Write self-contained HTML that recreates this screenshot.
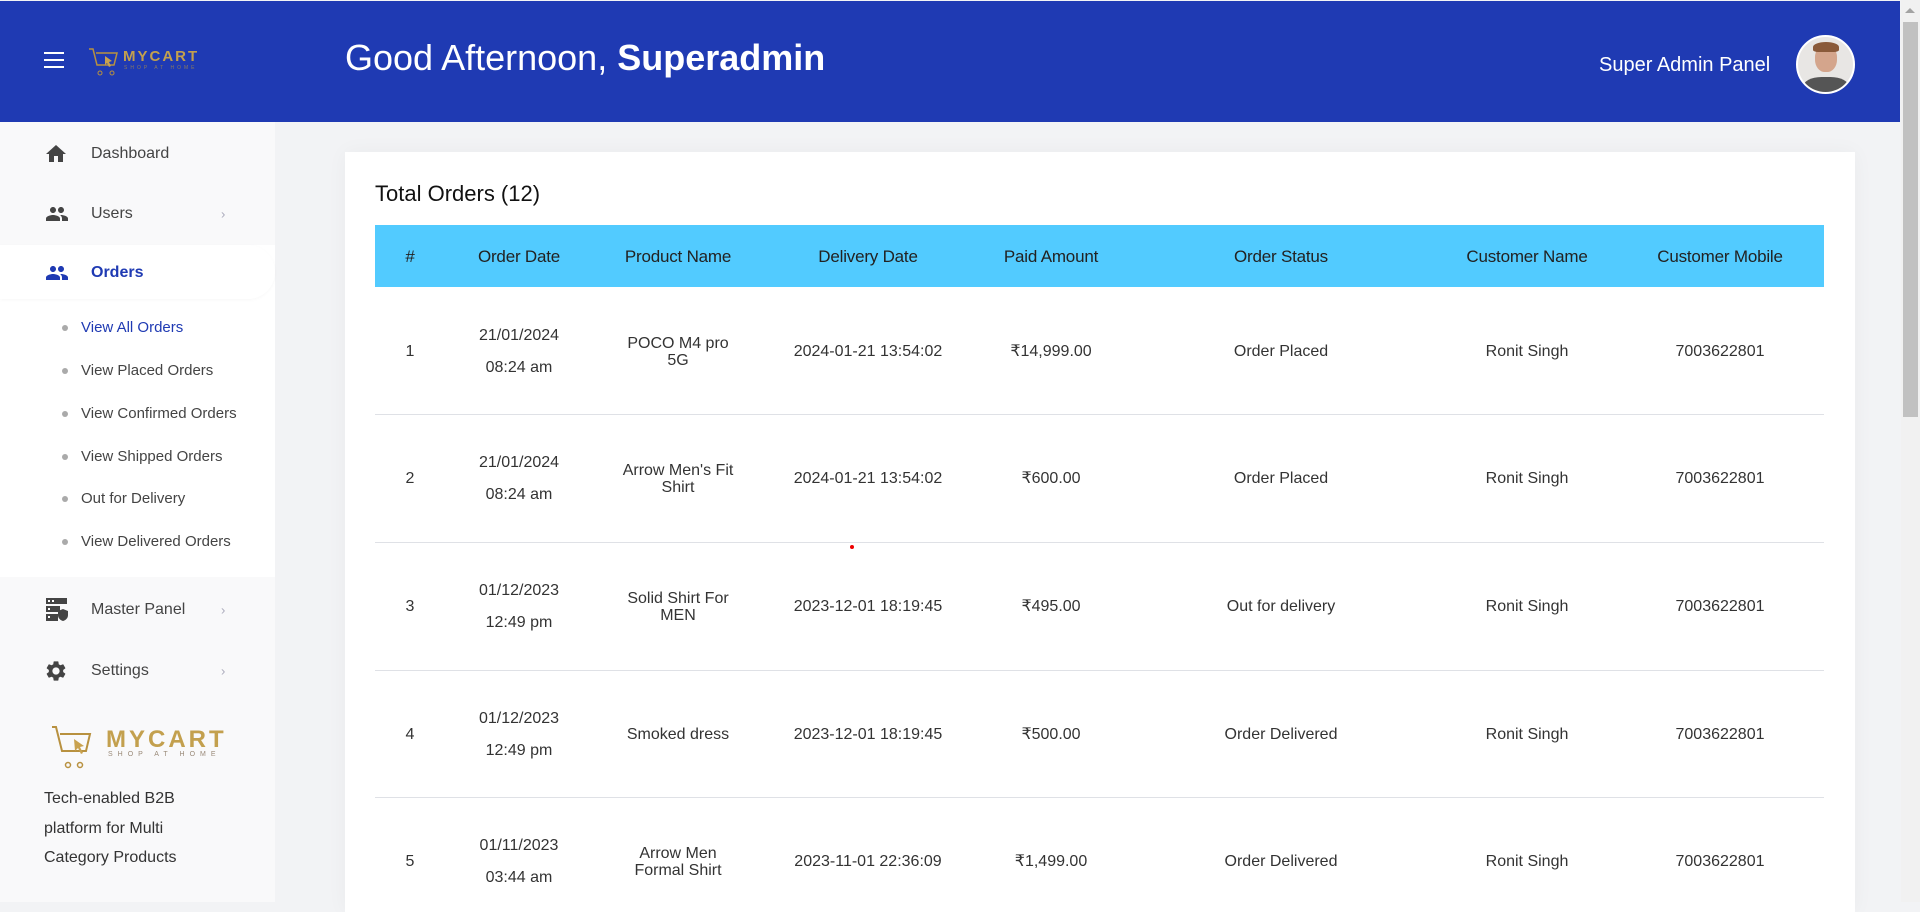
<!DOCTYPE html>
<html><head><meta charset="utf-8"><style>
*{margin:0;padding:0;box-sizing:border-box}
body{width:1920px;height:902px;overflow:hidden;background:#f2f3f5;font-family:"Liberation Sans",sans-serif;position:relative;color:#333}
.hdr{position:absolute;left:0;top:1px;width:1900px;height:121px;background:#1f3ab3}
.abs{position:absolute}
.sb{position:absolute;left:0;top:122px;width:275px;height:780px;background:#f9f9fa}
.menu{position:absolute;left:91px;font-size:16px;line-height:20px;color:#444;transform:translateY(-50%)}
.ico{position:absolute;left:44px;transform:translateY(-50%)}
.chev{position:absolute;left:221px;font-size:13px;color:#aab;transform:translateY(-50%)}
.sub{position:absolute;left:81px;font-size:15px;line-height:18px;color:#444;transform:translateY(-50%)}
.dot{position:absolute;left:62px;width:6px;height:6px;border-radius:50%;background:#aaa;transform:translateY(-50%)}
.card{position:absolute;left:345px;top:152px;width:1510px;height:760px;background:#fff;box-shadow:0 0 20px rgba(0,0,0,.04)}
.th{position:absolute;left:375px;top:225px;width:1449px;height:62px;background:#52cbff}
.c{position:absolute;transform:translate(-50%,-50%);text-align:center;white-space:nowrap;line-height:20px}
.h{font-size:17px;color:#222;letter-spacing:-0.2px}
.d{font-size:16px;color:#333}
.line{position:absolute;left:375px;width:1449px;height:1px;background:#dfe1e6}
.sc{position:absolute;left:1901px;top:0;width:19px;height:902px;background:#f1f1f1}
</style></head><body>
<div class="hdr"></div>
<div class="abs" style="left:44px;top:52px;width:20px;height:2px;background:#fff"></div>
<div class="abs" style="left:44px;top:59px;width:20px;height:2px;background:#fff"></div>
<div class="abs" style="left:44px;top:66px;width:20px;height:2px;background:#fff"></div>
<svg class="abs" style="left:88px;top:47px" width="32" height="30" viewBox="0 0 32 30"><path d="M1 2h4l4 16h17l3-12H8" fill="none" stroke="#b8913f" stroke-width="1.5"/><circle cx="12" cy="26" r="2" fill="none" stroke="#b8913f"/><circle cx="24" cy="26" r="2" fill="none" stroke="#b8913f"/><path d="M17 9l7 5-3 1 2 4-2 1-2-4-2 2z" fill="#c9a24f"/></svg>
<div class="abs" style="left:123px;top:48px;font-size:15px;font-weight:bold;letter-spacing:2px;color:#c3a04e">MYCART</div>
<div class="abs" style="left:124px;top:65px;font-size:5px;letter-spacing:3px;color:#8a7a60">SHOP AT HOME</div>
<div class="abs" style="left:345px;top:37px;font-size:36px;color:#fff">Good Afternoon, <b>Superadmin</b></div>
<div class="abs" style="left:1599px;top:54px;font-size:20px;color:#fff">Super Admin Panel</div>
<div class="abs" style="left:1796px;top:35px;width:59px;height:59px;border-radius:50%;border:2px solid #fff;background:#e8e6e4;overflow:hidden">
<div class="abs" style="left:17px;top:8px;width:22px;height:27px;border-radius:45%;background:#d4a58c"></div>
<div class="abs" style="left:15px;top:5px;width:26px;height:10px;border-radius:50% 50% 20% 20%;background:#8a5a3a"></div>
<div class="abs" style="left:5px;top:40px;width:46px;height:25px;border-radius:40% 40% 0 0;background:#555"></div>
</div>
<div class="sb"></div>
<div class="abs" style="left:0;top:245px;width:275px;height:332px;background:#fff"></div>
<div class="abs" style="left:0;top:245px;width:275px;height:54px;background:#fff;border-radius:0 27px 27px 0;box-shadow:0 1px 3px rgba(0,0,0,.03)"></div>
<svg class="ico" style="top:154px" width="24" height="24" viewBox="0 0 24 24"><path d="M10 20v-6h4v6h5v-8h3L12 3 2 12h3v8z" fill="#444"/></svg>
<div class="menu" style="top:154px">Dashboard</div>
<svg class="ico" style="top:214px" width="26" height="24" viewBox="0 0 24 24"><path d="M16 11c1.66 0 3-1.34 3-3s-1.34-3-3-3-3 1.34-3 3 1.34 3 3 3zm-8 0c1.66 0 3-1.34 3-3S9.66 5 8 5 5 6.34 5 8s1.34 3 3 3zm0 2c-2.33 0-7 1.17-7 3.5V19h14v-2.5c0-2.33-4.67-3.5-7-3.5zm8 0c-.29 0-.62.02-.97.05 1.16.84 1.97 1.970 1.97 3.45V19h6v-2.5c0-2.33-4.67-3.5-7-3.5z" fill="#444"/></svg>
<div class="menu" style="top:214px">Users</div><div class="chev" style="top:214px">›</div>
<svg class="ico" style="top:273px" width="26" height="24" viewBox="0 0 24 24"><path d="M16 11c1.66 0 3-1.34 3-3s-1.34-3-3-3-3 1.34-3 3 1.34 3 3 3zm-8 0c1.66 0 3-1.34 3-3S9.66 5 8 5 5 6.34 5 8s1.34 3 3 3zm0 2c-2.33 0-7 1.17-7 3.5V19h14v-2.5c0-2.33-4.67-3.5-7-3.5zm8 0c-.29 0-.62.02-.97.05 1.160.84 1.97 1.97 1.97 3.45V19h6v-2.5c0-2.33-4.67-3.5-7-3.5z" fill="#1f3ab3"/></svg>
<div class="menu" style="top:273px;color:#1f3ab3;font-weight:bold">Orders</div>
<div class="dot" style="top:328px"></div><div class="sub" style="top:328px;color:#1f3ab3">View All Orders</div>
<div class="dot" style="top:371px"></div><div class="sub" style="top:371px">View Placed Orders</div>
<div class="dot" style="top:414px"></div><div class="sub" style="top:414px">View Confirmed Orders</div>
<div class="dot" style="top:457px"></div><div class="sub" style="top:457px">View Shipped Orders</div>
<div class="dot" style="top:499px"></div><div class="sub" style="top:499px">Out for Delivery</div>
<div class="dot" style="top:542px"></div><div class="sub" style="top:542px">View Delivered Orders</div>
<svg class="ico" style="top:610px;left:45px" width="24" height="26" viewBox="0 0 24 26"><rect x="1" y="1" width="21" height="6" fill="#444"/><rect x="1" y="9" width="14" height="6" fill="#444"/><rect x="1" y="17" width="12" height="7" fill="#444"/><rect x="3" y="3" width="2" height="2" fill="#fff"/><rect x="7" y="3" width="2" height="2" fill="#fff"/><rect x="3" y="11" width="2" height="2" fill="#fff"/><rect x="3" y="19" width="2" height="2" fill="#fff"/><path d="M18 12l5 2v4c0 3-2 5-5 6-3-1-5-3-5-6v-4z" fill="#444"/></svg>
<div class="menu" style="top:610px">Master Panel</div><div class="chev" style="top:610px">›</div>
<svg class="ico" style="top:671px" width="24" height="24" viewBox="0 0 24 24"><path d="M19.14 12.94c.04-.3.06-.61.06-.94 0-.32-.02-.64-.07-.94l2.03-1.58a.49.49 0 00.12-.61l-1.92-3.32a.488.488 0 00-.59-.22l-2.39.96c-.5-.38-1.03-.7-1.62-.94l-.36-2.54a.484.484 0 00-.48-.41h-3.84c-.24 0-.43.17-.47.41l-.36 2.54c-.59.24-1.130.57-1.62.94l-2.39-.96c-.22-.08-.47 0-.59.22L2.74 8.87c-.12.21-.08.47.12.61l2.03 1.58c-.05.3-.09.63-.09.94s.02.64.07.94l-2.03 1.58a.49.49 0 00-.12.61l1.92 3.32c.12.22.37.29.59.22l2.39-.96c.5.38 1.03.7 1.62.94l.36 2.54c.05.24.24.41.48.41h3.84c.24 0 .44-.17.47-.41l.36-2.54c.59-.24 1.13-.56 1.62-.94l2.39.96c.22.08.47 0 .59-.22l1.92-3.32c.12-.22.07-.47-.12-.61l-2.01-1.58zM12 15.6c-1.98 0-3.6-1.62-3.6-3.6s1.62-3.6 3.6-3.6 3.6 1.62 3.6 3.6-1.62 3.6-3.6 3.6z" fill="#444"/></svg>
<div class="menu" style="top:671px">Settings</div><div class="chev" style="top:671px">›</div>
<svg class="abs" style="left:50px;top:724px" width="46" height="46" viewBox="0 0 46 46"><path d="M2 3h4l6 24h24l4-17H10" fill="none" stroke="#b8913f" stroke-width="2"/><circle cx="18" cy="41" r="2.5" fill="none" stroke="#b8913f" stroke-width="1.5"/><circle cx="30" cy="41" r="2.5" fill="none" stroke="#b8913f" stroke-width="1.5"/><path d="M24 15l10 7-4 1 3 6-2 1-3-6-3 3z" fill="#c9a24f"/></svg>
<div class="abs" style="left:106px;top:726px;font-size:24px;font-weight:bold;letter-spacing:3px;color:#c3a04e">MYCART</div>
<div class="abs" style="left:108px;top:751px;font-size:7px;letter-spacing:5px;color:#9a8a78">SHOP AT HOME</div>
<div class="abs" style="left:44px;top:784px;font-size:16px;line-height:29.5px;color:#333">Tech-enabled B2B<br>platform for Multi<br>Category Products</div>
<div class="card"></div>
<div class="abs" style="left:375px;top:181px;font-size:22px;color:#111">Total Orders (12)</div>
<div class="th"></div>
<div class="c h" style="left:410px;top:257px">#</div>
<div class="c h" style="left:519px;top:257px">Order Date</div>
<div class="c h" style="left:678px;top:257px">Product Name</div>
<div class="c h" style="left:868px;top:257px">Delivery Date</div>
<div class="c h" style="left:1051px;top:257px">Paid Amount</div>
<div class="c h" style="left:1281px;top:257px">Order Status</div>
<div class="c h" style="left:1527px;top:257px">Customer Name</div>
<div class="c h" style="left:1720px;top:257px">Customer Mobile</div>
<div class="line" style="top:414px"></div>
<div class="line" style="top:542px"></div>
<div class="line" style="top:670px"></div>
<div class="line" style="top:797px"></div>

<div class="c d" style="left:410px;top:352px">1</div>
<div class="c d" style="left:519px;top:352px;line-height:32px">21/01/2024<br>08:24 am</div>
<div class="c d" style="left:678px;top:352px;line-height:17px">POCO M4 pro<br>5G</div>
<div class="c d" style="left:868px;top:352px">2024-01-21 13:54:02</div>
<div class="c d" style="left:1051px;top:352px">₹14,999.00</div>
<div class="c d" style="left:1281px;top:352px">Order Placed</div>
<div class="c d" style="left:1527px;top:352px">Ronit Singh</div>
<div class="c d" style="left:1720px;top:352px">7003622801</div>

<div class="c d" style="left:410px;top:479px">2</div>
<div class="c d" style="left:519px;top:479px;line-height:32px">21/01/2024<br>08:24 am</div>
<div class="c d" style="left:678px;top:479px;line-height:17px">Arrow Men's Fit<br>Shirt</div>
<div class="c d" style="left:868px;top:479px">2024-01-21 13:54:02</div>
<div class="c d" style="left:1051px;top:479px">₹600.00</div>
<div class="c d" style="left:1281px;top:479px">Order Placed</div>
<div class="c d" style="left:1527px;top:479px">Ronit Singh</div>
<div class="c d" style="left:1720px;top:479px">7003622801</div>
<div class="abs" style="left:850px;top:545px;width:4px;height:4px;border-radius:50%;background:#e00"></div>

<div class="c d" style="left:410px;top:607px">3</div>
<div class="c d" style="left:519px;top:607px;line-height:32px">01/12/2023<br>12:49 pm</div>
<div class="c d" style="left:678px;top:607px;line-height:17px">Solid Shirt For<br>MEN</div>
<div class="c d" style="left:868px;top:607px">2023-12-01 18:19:45</div>
<div class="c d" style="left:1051px;top:607px">₹495.00</div>
<div class="c d" style="left:1281px;top:607px">Out for delivery</div>
<div class="c d" style="left:1527px;top:607px">Ronit Singh</div>
<div class="c d" style="left:1720px;top:607px">7003622801</div>

<div class="c d" style="left:410px;top:735px">4</div>
<div class="c d" style="left:519px;top:735px;line-height:32px">01/12/2023<br>12:49 pm</div>
<div class="c d" style="left:678px;top:735px">Smoked dress</div>
<div class="c d" style="left:868px;top:735px">2023-12-01 18:19:45</div>
<div class="c d" style="left:1051px;top:735px">₹500.00</div>
<div class="c d" style="left:1281px;top:735px">Order Delivered</div>
<div class="c d" style="left:1527px;top:735px">Ronit Singh</div>
<div class="c d" style="left:1720px;top:735px">7003622801</div>

<div class="c d" style="left:410px;top:862px">5</div>
<div class="c d" style="left:519px;top:862px;line-height:32px">01/11/2023<br>03:44 am</div>
<div class="c d" style="left:678px;top:862px;line-height:17px">Arrow Men<br>Formal Shirt</div>
<div class="c d" style="left:868px;top:862px">2023-11-01 22:36:09</div>
<div class="c d" style="left:1051px;top:862px">₹1,499.00</div>
<div class="c d" style="left:1281px;top:862px">Order Delivered</div>
<div class="c d" style="left:1527px;top:862px">Ronit Singh</div>
<div class="c d" style="left:1720px;top:862px">7003622801</div>

<div class="sc"></div>
<div class="abs" style="left:1903px;top:22px;width:15px;height:395px;background:#c1c1c1"></div>
<div class="abs" style="left:1905px;top:8px;width:0;height:0;border-left:5px solid transparent;border-right:5px solid transparent;border-bottom:5px solid #a3a3a3"></div>
</body></html>
